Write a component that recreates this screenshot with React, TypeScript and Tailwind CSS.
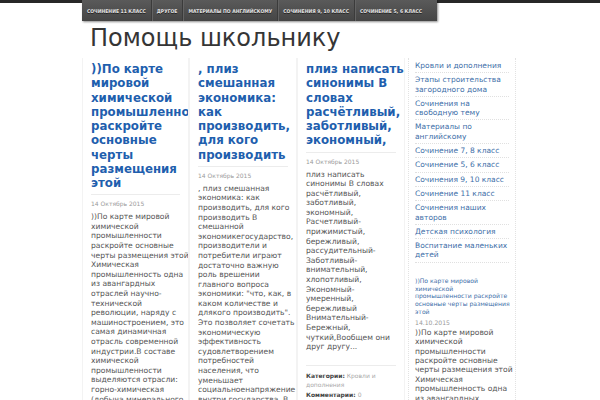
import React from "react";

const navItems = [
  "СОЧИНЕНИЕ 11 КЛАСС",
  "ДРУГОЕ",
  "МАТЕРИАЛЫ ПО АНГЛИЙСКОМУ",
  "СОЧИНЕНИЯ 9, 10 КЛАСС",
  "СОЧИНЕНИЕ 5, 6 КЛАСС",
];

const posts = [
  {
    title: ["))По карте", "мировой", "химической", "промышленности", "раскройте", "основные", "черты", "размещения", "этой"],
    body: [
      "))По карте мировой",
      "химической",
      "промышленности",
      "раскройте основные",
      "черты размещения этой",
      "Химическая",
      "промышленность одна",
      "из авангардных",
      "отраслей научно-",
      "технической",
      "революции, наряду с",
      "машиностроением, это",
      "самая динамичная",
      "отрасль современной",
      "индустрии.В составе",
      "химической",
      "промышленности",
      "выделяются отрасли:",
      "горно-химическая",
      "(добыча минерального",
      "сырья...",
    ],
    meta: false,
  },
  {
    title: [", плиз", "смешанная", "экономика:", "как", "производить,", "для кого", "производить"],
    body: [
      ", плиз смешанная",
      "экономика: как",
      "производить, для кого",
      "производить В",
      "смешанной",
      "экономикегосударство,",
      "производители и",
      "потребители играют",
      "достаточно важную",
      "роль врешении",
      "главного вопроса",
      "экономики: \"что, как, в",
      "каком количестве и",
      "длякого производить\".",
      "Это позволяет сочетать",
      "экономическую",
      "эффективность",
      "судовлетворением",
      "потребностей",
      "населения, что",
      "уменьшает",
      "социальноенапряжение",
      "внутри государства. В",
      "...",
    ],
    meta: false,
  },
  {
    title: ["плиз написать", "синонимы В", "словах", "расчётливый,", "заботливый,", "экономный,"],
    body: [
      "плиз написать",
      "синонимы В словах",
      "расчётливый,",
      "заботливый,",
      "экономный,",
      "Расчетливый-",
      "прижимистый,",
      "бережливый,",
      "рассудительный-",
      "Заботливый-",
      "внимательный,",
      "хлопотливый,",
      "Экономный-",
      "умеренный,",
      "бережливый",
      "Внимательный-",
      "Бережный,",
      "чуткий,Вообщем они",
      "друг другу...",
    ],
    meta: true,
  },
];

const sideLinks = [
  ["Кровли и дополнения"],
  ["Этапы строительства", "загородного дома"],
  ["Сочинения на", "свободную тему"],
  ["Материалы по", "английскому"],
  ["Сочинение 7, 8 класс"],
  ["Сочинение 5, 6 класс"],
  ["Сочинения 9, 10 класс"],
  ["Сочинение 11 класс"],
  ["Сочинения наших", "авторов"],
  ["Детская психология"],
  ["Воспитание маленьких", "детей"],
];

function Lines({ lines }: { lines: string[] }) {
  return (
    <>
      {lines.map((l, i) => (
        <span key={i} className="block whitespace-nowrap">
          {l}
        </span>
      ))}
    </>
  );
}

export default function App() {
  return (
    <div className="w-[600px] h-[400px] overflow-hidden bg-white font-['DejaVu_Sans',sans-serif]">
      <div className="h-[21px] bg-[linear-gradient(to_bottom,#272727_0px,#272727_3px,#ffffff_3px)]">
        <nav className="ml-[82px] w-[355px] h-full flex bg-[linear-gradient(to_bottom,#5a5a5a,#454545)] shadow-[1px_1px_2px_rgba(0,0,0,0.45)]">
          {navItems.map((n, i) => (
            <div
              key={n}
              className={
                "flex items-center pt-[2px] px-[5px] font-['DejaVu_Sans_Condensed','DejaVu_Sans',sans-serif] text-[5px] font-bold text-[#e4e4e4] whitespace-nowrap [text-shadow:0_1px_0_#222] " +
                (i < navItems.length - 1 ? "border-r border-[#3b3b3b] shadow-[1px_0_0_#636363]" : "")
              }
            >
              {n}
            </div>
          ))}
        </nav>
      </div>

      <h1 className="ml-[90px] mt-[2px] text-[24px] leading-[31px] text-[#353535] font-normal">
        Помощь школьнику
      </h1>

      <div className="ml-[82px] mt-[4px] flex items-start">
        {posts.map((p, i) => (
          <div
            key={i}
            className={
              (i === 0 ? "w-[107px]" : "w-[108px]") +
              " px-[8px] pt-[4px] h-[400px] overflow-hidden border-x border-[#f3f3f3]"
            }
          >
            <h2 className="text-[11.8px] leading-[14.25px] font-bold text-[#1f5fae] pb-[4px] border-b border-[#ececec]">
              <Lines lines={p.title} />
            </h2>
            <div className="mt-[5px] text-[6px] leading-[8px] text-[#9a9a9a] whitespace-nowrap">14 Октябрь 2015</div>
            <div className="mt-[4px] text-[7.6px] leading-[9.6px] text-[#555]">
              <Lines lines={p.body} />
            </div>
            {p.meta && (
              <div className="mt-[13px] pt-[5px] border-t border-[#ececec] text-[6px] leading-[9px]">
                <div>
                  <span className="font-bold text-[#444]">Категории:</span>{" "}
                  <span className="text-[#a8a8a8]">Кровли и</span>
                </div>
                <div className="text-[#a8a8a8]">дополнения</div>
                <div className="mt-[1px] font-bold text-[#444]">
                  Комментарии: <span className="font-normal text-[#a8a8a8]">0</span>
                </div>
              </div>
            )}
          </div>
        ))}

        <aside className="ml-[3px] w-[108px] h-[400px] px-[6px] pt-[1px] border-x border-dotted border-[#e2e2e2]">
          <ul>
            {sideLinks.map((s, i) => (
              <li
                key={i}
                className="py-[2px] border-b border-dotted border-[#e0e0e0] text-[7.5px] leading-[9.3px] text-[#3d6ea8]"
              >
                <Lines lines={s} />
              </li>
            ))}
          </ul>
          <div className="mt-[14px] text-[6.1px] leading-[7.8px] text-[#3d6ea8]">
            <Lines
              lines={[
                "))По карте мировой",
                "химической",
                "промышленности раскройте",
                "основные черты размещения",
                "этой",
              ]}
            />
          </div>
          <div className="mt-[3px] text-[6.1px] leading-[8px] text-[#9a9a9a]">14.10.2015</div>
          <div className="mt-[1px] text-[7.6px] leading-[9.4px] text-[#555]">
            <Lines
              lines={[
                "))По карте мировой",
                "химической",
                "промышленности",
                "раскройте основные",
                "черты размещения этой",
                "Химическая",
                "промышленность одна",
                "из авангардных",
              ]}
            />
          </div>
        </aside>
      </div>
    </div>
  );
}
